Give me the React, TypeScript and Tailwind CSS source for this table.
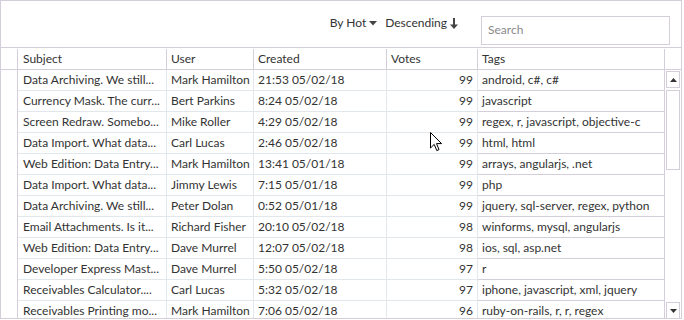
interface Row {
  subject: string;
  user: string;
  created: string;
  votes: number;
  tags: string;
}

const rows: Row[] = [
  { subject: 'Data Archiving. We still...', user: 'Mark Hamilton', created: '21:53 05/02/18', votes: 99, tags: 'android, c#, c#' },
  { subject: 'Currency Mask. The curr...', user: 'Bert Parkins', created: '8:24 05/02/18', votes: 99, tags: 'javascript' },
  { subject: 'Screen Redraw. Somebo...', user: 'Mike Roller', created: '4:29 05/02/18', votes: 99, tags: 'regex, r, javascript, objective-c' },
  { subject: 'Data Import. What data...', user: 'Carl Lucas', created: '2:46 05/02/18', votes: 99, tags: 'html, html' },
  { subject: 'Web Edition: Data Entry...', user: 'Mark Hamilton', created: '13:41 05/01/18', votes: 99, tags: 'arrays, angularjs, .net' },
  { subject: 'Data Import. What data...', user: 'Jimmy Lewis', created: '7:15 05/01/18', votes: 99, tags: 'php' },
  { subject: 'Data Archiving. We still...', user: 'Peter Dolan', created: '0:52 05/01/18', votes: 99, tags: 'jquery, sql-server, regex, python' },
  { subject: 'Email Attachments. Is it...', user: 'Richard Fisher', created: '20:10 05/02/18', votes: 98, tags: 'winforms, mysql, angularjs' },
  { subject: 'Web Edition: Data Entry...', user: 'Dave Murrel', created: '12:07 05/02/18', votes: 98, tags: 'ios, sql, asp.net' },
  { subject: 'Developer Express Mast...', user: 'Dave Murrel', created: '5:50 05/02/18', votes: 97, tags: 'r' },
  { subject: 'Receivables Calculator....', user: 'Carl Lucas', created: '5:32 05/02/18', votes: 97, tags: 'iphone, javascript, xml, jquery' },
  { subject: 'Receivables Printing mo...', user: 'Mark Hamilton', created: '7:06 05/02/18', votes: 96, tags: 'ruby-on-rails, r, r, regex' },
];

const Cursor = () => (
  <svg className="absolute left-[429px] top-[131px]" width="13" height="20" viewBox="0 0 13 20">
    <path
      d="M0.5 0.5 L0.5 16 L4.2 12.4 L6.8 18.6 L9 17.6 L6.5 11.6 L11.6 11.6 Z"
      fill="#fff"
      stroke="#000"
      strokeWidth="1"
    />
  </svg>
);

export default function App() {
  return (
    <div
      className="relative w-[682px] h-[319px] overflow-hidden border border-[#d4cedb] bg-white text-[12px] text-[#333]"
      style={{ fontFamily: 'Lato, "Noto Sans", sans-serif' }}
    >
      <div className="flex h-[47px] items-center justify-end border-b border-[#d4cedb] pr-[11px]">
        <div className="flex items-center gap-[8px] pb-[2px]">
          <span className="flex items-center gap-[3px]">
            By Hot
            <svg width="8" height="5" viewBox="0 0 8 5">
              <path d="M0 0 L8 0 L4 4.5 Z" fill="#444" />
            </svg>
          </span>
          <span className="flex items-center gap-[3px]">
            Descending
            <svg width="8" height="11" viewBox="0 0 8 11">
              <path d="M3 0 H5 V6.5 H8 L4 11 L0 6.5 H3 Z" fill="#444" />
            </svg>
          </span>
        </div>
        <div className="ml-[23px] mt-[12px] flex h-[29px] w-[189px] items-center border border-[#d4cedb] px-[6px] text-[#8a8a8a]">
          Search
        </div>
      </div>

      <div className="flex h-[22px] border-b border-[#d4cedb] pt-[1px]">
        <div className="w-[17px] border-r border-[#d4cedb]" />
        <div className="flex w-[149px] items-center border-r border-[#d4cedb] pl-[5px]">Subject</div>
        <div className="flex w-[87px] items-center border-r border-[#d4cedb] pl-[4px]">User</div>
        <div className="flex w-[133px] items-center border-r border-[#d4cedb] pl-[4px]">Created</div>
        <div className="flex w-[91px] items-center border-r border-[#d4cedb] pl-[4px]">Votes</div>
        <div className="flex w-[187px] items-center border-r border-[#d4cedb] pl-[4px]">Tags</div>
        <div className="w-[16px]" />
      </div>

      <div className="flex">
        <div className="flex flex-col">
          {rows.map((r, i) => (
            <div key={i} className="flex h-[21px] shrink-0">
              <div className="w-[17px] border-r border-[#d4cedb]" />
              <div className="flex w-[149px] items-center overflow-hidden whitespace-nowrap border-b border-r border-[#e1e7eb] pl-[5px]">
                {r.subject}
              </div>
              <div className="flex w-[87px] items-center overflow-hidden whitespace-nowrap border-b border-r border-[#e1e7eb] pl-[4px]">
                {r.user}
              </div>
              <div className="flex w-[133px] items-center overflow-hidden whitespace-nowrap border-b border-r border-[#e1e7eb] pl-[4px]">
                {r.created}
              </div>
              <div className="flex w-[91px] items-center justify-end whitespace-nowrap border-b border-r border-[#e1e7eb] pr-[4px]">
                {r.votes}
              </div>
              <div className="flex w-[187px] items-center overflow-hidden whitespace-nowrap border-b border-r border-[#d4cedb] pl-[4px]">
                {r.tags}
              </div>
            </div>
          ))}
        </div>
        <div className="flex h-[249px] w-[16px] flex-col items-center pt-[1px]">
          <div className="flex h-[17px] w-[14px] items-center justify-center border border-[#d4cedb]">
            <svg width="7" height="4" viewBox="0 0 7 4">
              <path d="M0 4 L7 4 L3.5 0 Z" fill="#333" />
            </svg>
          </div>
          <div className="mt-[2px] h-[80px] w-[14px] border border-[#d4cedb]" />
          <div className="flex-1" />
          <div className="flex h-[17px] w-[14px] items-center justify-center border border-[#d4cedb]">
            <svg width="7" height="4" viewBox="0 0 7 4">
              <path d="M0 0 L7 0 L3.5 4 Z" fill="#333" />
            </svg>
          </div>
        </div>
      </div>
      <Cursor />
    </div>
  );
}
